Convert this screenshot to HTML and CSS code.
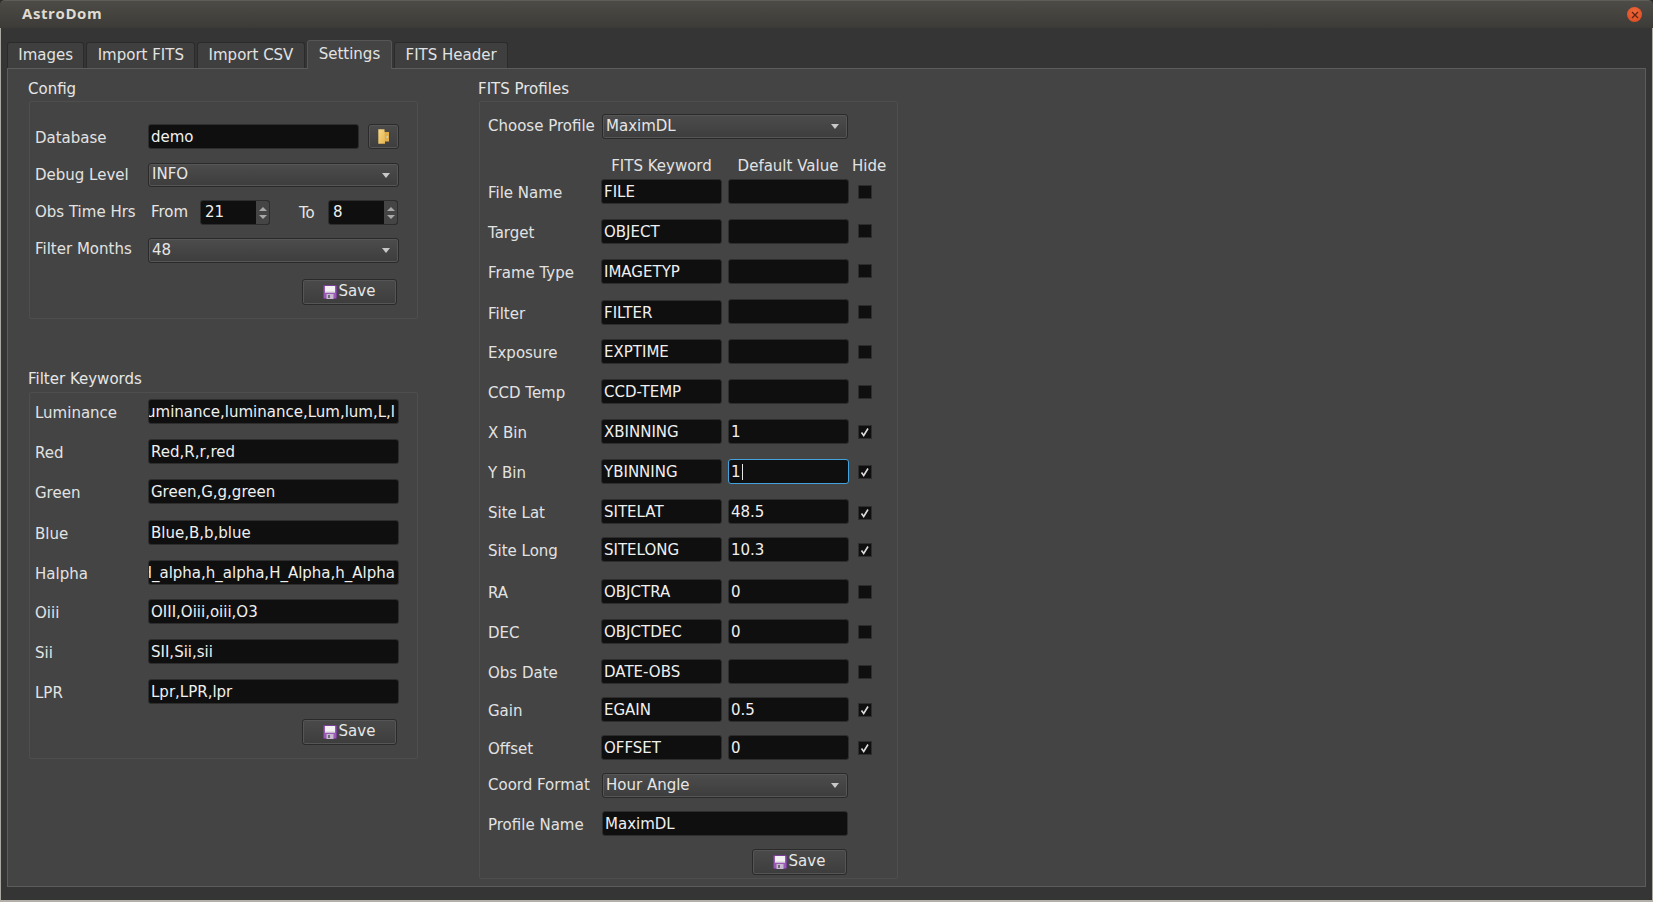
FILE: index.html
```html
<!DOCTYPE html>
<html>
<head>
    <title>AstroDom</title>
    <link rel="stylesheet" href="styles.css">
</head>
<body>
    <svg class="icon-defs" width="0" height="0">
        <symbol id="floppy" viewBox="0 0 14 14">
            <path d="M0.5 1.5a1 1 0 0 1 1-1h11a1 1 0 0 1 1 1v11a1 1 0 0 1-1 1h-11a1 1 0 0 1-1-1z" fill="#9b59b6" stroke="#7a3f96"/>
            <rect x="2" y="1" width="10" height="6.5" fill="#f2f2f2"/>
            <rect x="2" y="6.5" width="10" height="1" fill="#cfcfcf"/>
            <rect x="3.5" y="9" width="7" height="5" fill="#c9b8d2"/>
            <rect x="5" y="10" width="2" height="3" fill="#6d6d6d"/>
        </symbol>
        <symbol id="caret" viewBox="0 0 8 5">
            <path d="M0 0h8l-4 5z" fill="#c8c8c8"/>
        </symbol>
        <symbol id="tick" viewBox="0 0 12 12">
            <path d="M2.5 6.5l2.2 3 4.3-7" fill="none" stroke="#dcdcdc" stroke-width="1.6"/>
        </symbol>
        <linearGradient id="folder-door" x1="0" y1="0" x2="1" y2="1">
            <stop offset="0" stop-color="#f8da86"/>
            <stop offset="1" stop-color="#e5b44f"/>
        </linearGradient>
    </svg>

    <div class="window">
        <div class="titlebar">
            <span class="window-title">AstroDom</span>
            <span class="close-btn">
                <svg width="8" height="8" viewBox="0 0 8 8"><path d="M1 1l6 6M7 1l-6 6" stroke="#5b2415" stroke-width="1.3"/></svg>
            </span>
        </div>

        <div class="content">
            <div class="tabs">
                <div class="tab">Images</div>
                <div class="tab">Import FITS</div>
                <div class="tab">Import CSV</div>
                <div class="tab active">Settings</div>
                <div class="tab">FITS Header</div>
            </div>

            <div class="pane">
                <div class="left-col">
                    <div class="group-title">Config</div>
                    <div class="group config-group">
                        <div class="label">Database</div>
                        <div class="field">demo</div>
                        <div class="tool-btn">
                            <svg width="11" height="15" viewBox="0 0 11 15">
                                <path d="M6 3h5v9.5h-5z" fill="#e0ad4c"/>
                                <path d="M0.3 0.3h6.2l0.5 14.4h-6.7z" fill="url(#folder-door)"/>
                                <rect x="8.5" y="7" width="1.5" height="2" fill="#a8d8e4"/>
                            </svg>
                        </div>

                        <div class="label label-up">Debug Level</div>
                        <div class="combo wide debug-combo">INFO<svg class="caret"><use href="#caret"/></svg></div>

                        <div class="label label-up">Obs Time Hrs</div>
                        <div class="time-row wide">
                            <span class="from-label">From</span>
                            <div class="spin"><span class="spin-value">21</span><span class="spin-arrows"><i class="up"></i><i class="down"></i></span></div>
                            <span class="to-label">To</span>
                            <div class="spin"><span class="spin-value">8</span><span class="spin-arrows"><i class="up"></i><i class="down"></i></span></div>
                        </div>

                        <div class="label label-up-more">Filter Months</div>
                        <div class="combo wide">48<svg class="caret"><use href="#caret"/></svg></div>

                        <div class="button save-wide"><svg class="floppy"><use href="#floppy"/></svg>Save</div>
                    </div>

                    <div class="group-title filter-title">Filter Keywords</div>
                    <div class="group filter-group">
                        <div class="label">Luminance</div>
                        <div class="field clipped">Luminance,luminance,Lum,lum,L,l</div>
                        <div class="label">Red</div>
                        <div class="field">Red,R,r,red</div>
                        <div class="label">Green</div>
                        <div class="field">Green,G,g,green</div>
                        <div class="label">Blue</div>
                        <div class="field">Blue,B,b,blue</div>
                        <div class="label">Halpha</div>
                        <div class="field clipped">H_alpha,h_alpha,H_Alpha,h_Alpha</div>
                        <div class="label">Oiii</div>
                        <div class="field">OIII,Oiii,oiii,O3</div>
                        <div class="label">Sii</div>
                        <div class="field">SII,Sii,sii</div>
                        <div class="label">LPR</div>
                        <div class="field">Lpr,LPR,lpr</div>
                        <div class="button save-filter"><svg class="floppy"><use href="#floppy"/></svg>Save</div>
                    </div>
                </div>

                <div class="right-col">
                    <div class="group-title">FITS Profiles</div>
                    <div class="group profile-group">
                        <div class="label label-up">Choose Profile</div>
                        <div class="combo span-two">MaximDL<svg class="caret"><use href="#caret"/></svg></div>
                        <div></div>

                        <div></div>
                        <div class="col-head">FITS Keyword</div>
                        <div class="col-head default-head">Default Value</div>
                        <div class="col-head hide-head">Hide</div>

                        <div class="label">File Name</div>
                        <div class="field">FILE</div>
                        <div class="field"></div>
                        <div class="check"></div>

                        <div class="label">Target</div>
                        <div class="field">OBJECT</div>
                        <div class="field"></div>
                        <div class="check check-up"></div>

                        <div class="label">Frame Type</div>
                        <div class="field">IMAGETYP</div>
                        <div class="field"></div>
                        <div class="check check-up"></div>

                        <div class="label">Filter</div>
                        <div class="field">FILTER</div>
                        <div class="field field-up"></div>
                        <div class="check check-up"></div>

                        <div class="label">Exposure</div>
                        <div class="field">EXPTIME</div>
                        <div class="field"></div>
                        <div class="check"></div>

                        <div class="label">CCD Temp</div>
                        <div class="field">CCD-TEMP</div>
                        <div class="field"></div>
                        <div class="check"></div>

                        <div class="label">X Bin</div>
                        <div class="field">XBINNING</div>
                        <div class="field">1</div>
                        <div class="check"><svg class="tick"><use href="#tick"/></svg></div>

                        <div class="label">Y Bin</div>
                        <div class="field">YBINNING</div>
                        <div class="field focused">1<span class="cursor"></span></div>
                        <div class="check"><svg class="tick"><use href="#tick"/></svg></div>

                        <div class="label">Site Lat</div>
                        <div class="field">SITELAT</div>
                        <div class="field">48.5</div>
                        <div class="check check-down"><svg class="tick"><use href="#tick"/></svg></div>

                        <div class="label">Site Long</div>
                        <div class="field">SITELONG</div>
                        <div class="field">10.3</div>
                        <div class="check"><svg class="tick"><use href="#tick"/></svg></div>

                        <div class="label">RA</div>
                        <div class="field">OBJCTRA</div>
                        <div class="field">0</div>
                        <div class="check"></div>

                        <div class="label">DEC</div>
                        <div class="field">OBJCTDEC</div>
                        <div class="field">0</div>
                        <div class="check"></div>

                        <div class="label">Obs Date</div>
                        <div class="field">DATE-OBS</div>
                        <div class="field"></div>
                        <div class="check"></div>

                        <div class="label">Gain</div>
                        <div class="field">EGAIN</div>
                        <div class="field">0.5</div>
                        <div class="check"><svg class="tick"><use href="#tick"/></svg></div>

                        <div class="label">Offset</div>
                        <div class="field">OFFSET</div>
                        <div class="field">0</div>
                        <div class="check"><svg class="tick"><use href="#tick"/></svg></div>

                        <div class="label label-up">Coord Format</div>
                        <div class="combo span-two">Hour Angle<svg class="caret"><use href="#caret"/></svg></div>
                        <div></div>

                        <div class="label">Profile Name</div>
                        <div class="field span-two">MaximDL</div>
                        <div></div>

                        <div class="button save-profile"><svg class="floppy"><use href="#floppy"/></svg>Save</div>
                    </div>
                </div>
            </div>
        </div>
    </div>
</body>
</html>
```

FILE: styles.css
```css
html, body {
    margin: 0;
    padding: 0;
    height: 100%;
}

body {
    font-family: "DejaVu Sans", sans-serif;
    font-size: 15px;
    color: #e6e6e6;
    background-color: #2d2c2a;
    overflow: hidden;
}

.icon-defs {
    position: absolute;
}

.window {
    box-sizing: border-box;
    height: 100%;
    display: flex;
    flex-direction: column;
    border-bottom: 2px solid #b3b0a9;
}

.titlebar {
    height: 28px;
    flex: none;
    box-sizing: border-box;
    display: flex;
    align-items: center;
    justify-content: space-between;
    padding: 0 11px 0 22px;
    background: linear-gradient(#4d4b46, #3c3b37);
    border-top: 1px solid #5f5d58;
    border-radius: 5px 5px 0 0;
}

.window-title {
    margin-top: -4px;
    font-family: "Open Sans", sans-serif;
    font-weight: 700;
    font-size: 15px;
    letter-spacing: 0.6px;
    color: #dfdbd2;
}

.close-btn {
    width: 15px;
    height: 15px;
    display: flex;
    align-items: center;
    justify-content: center;
    border-radius: 50%;
    background: radial-gradient(circle at 50% 35%, #f0693a, #d9481f);
}

.content {
    flex: 1;
    min-height: 0;
    display: flex;
    flex-direction: column;
    padding: 12px 6px 13px 6px;
    background-color: #353535;
    border-left: 1px solid #a9a7a1;
    border-right: 1px solid #a9a7a1;
}

.tabs {
    display: flex;
    align-items: flex-end;
    gap: 2px;
    height: 28px;
    flex: none;
    position: relative;
    z-index: 1;
}

.tab {
    box-sizing: border-box;
    height: 26px;
    padding: 0 10.3px;
    line-height: 25px;
    color: #e2e2e2;
    background-color: #3f3f3f;
    border: 1px solid #2b2b2b;
    border-bottom: none;
    border-radius: 3px 3px 0 0;
}

.tab.active {
    height: 29px;
    margin-bottom: -1px;
    padding: 0 11px;
    background-color: #444444;
    border-color: #565656;
    line-height: 27px;
}

.pane {
    flex: 1;
    min-height: 0;
    display: flex;
    gap: 60px;
    padding: 9px 0 0 20px;
    background-color: #444444;
    border: 1px solid #5c5c5c;
}

.left-col {
    width: 390px;
    flex: none;
}

.right-col {
    width: 420px;
    flex: none;
}

.group-title {
    height: 23px;
    line-height: 22px;
    color: #e6e6e6;
}

.filter-title {
    height: 24px;
    margin-top: 49px;
}

.group {
    box-sizing: border-box;
    margin-left: 1px;
    display: grid;
    border: 1px solid #4e4e4e;
    border-radius: 2px;
    align-items: start;
}

.config-group {
    height: 218px;
    padding: 22px 0 0 5px;
    grid-template-columns: 113px 211px 9px 31px;
    grid-template-rows: 39px 37px 38px 41px 26px;
}

.filter-group {
    height: 367px;
    padding: 6px 0 0 5px;
    grid-template-columns: 113px 251px;
    grid-template-rows: 40px 40px 41px 40px 39px 40px 40px 40px 26px;
}

.profile-group {
    height: 778px;
    padding: 12px 0 0 8px;
    grid-template-columns: 113px 121px 127px 26px;
    grid-template-rows: 41px 24px 40px 40px 41px 39px 40px 40px 40px 40px 38px 42px 40px 40px 38px 38px 38px 38px 38px 26px;
}

.label {
    height: 25px;
    line-height: 29px;
    white-space: nowrap;
    color: #e2e2e2;
}

.label-up {
    margin-top: -2px;
}

.label-up-more {
    margin-top: -3px;
}

.field {
    box-sizing: border-box;
    height: 25px;
    min-width: 0;
    padding: 0 3px 0 2px;
    line-height: 24px;
    white-space: nowrap;
    overflow: hidden;
    color: #f0f0f0;
    background-color: #0f0f0f;
    border: 1px solid #2d2d2d;
    border-radius: 3px;
}

.profile-group .field + .field {
    margin-left: 6px;
}

.field-up {
    margin-top: -1px;
}

.clipped {
    display: flex;
    justify-content: flex-end;
}

.focused {
    border-color: #44a3de;
}

.cursor {
    display: inline-block;
    width: 1px;
    height: 16px;
    margin-left: 1px;
    vertical-align: -3px;
    background-color: #e6e6e6;
}

.tool-btn {
    grid-column: 4;
    box-sizing: border-box;
    height: 25px;
    display: flex;
    align-items: center;
    justify-content: center;
    background: linear-gradient(#4b4b4b, #3e3e3e);
    border: 1px solid #2b2b2b;
    border-radius: 3px;
    box-shadow: inset 0 0 0 1px #555555;
}

.combo {
    box-sizing: border-box;
    height: 25px;
    padding: 0 8px 2px 3px;
    display: flex;
    align-items: center;
    justify-content: space-between;
    color: #e6e6e6;
    background: linear-gradient(#4c4c4c, #3d3d3d);
    border: 1px solid #2a2a2a;
    border-radius: 3px;
    box-shadow: inset 0 0 0 1px #565656;
}

.debug-combo {
    height: 24px;
}

.caret {
    width: 8px;
    height: 5px;
    flex: none;
    margin-top: 2px;
}

.wide {
    grid-column: 2 / span 3;
}

.span-two {
    grid-column: 2 / span 2;
    margin: 0 1px;
}

.time-row {
    display: flex;
    align-items: center;
}

.from-label {
    width: 49px;
    margin-left: 3px;
    margin-top: -2px;
}

.to-label {
    width: 29px;
    margin-left: 29px;
}

.spin {
    box-sizing: border-box;
    width: 70px;
    height: 25px;
    display: flex;
    background-color: #0f0f0f;
    border: 1px solid #2d2d2d;
    border-radius: 3px;
    overflow: hidden;
}

.spin-value {
    flex: 1;
    padding-left: 4px;
    line-height: 23px;
    color: #f0f0f0;
}

.spin-arrows {
    width: 13px;
    display: flex;
    flex-direction: column;
    align-items: center;
    justify-content: center;
    gap: 4px;
    background-color: #454545;
}

.spin-arrows i {
    width: 0;
    height: 0;
    border-left: 4px solid transparent;
    border-right: 4px solid transparent;
}

.spin-arrows .up {
    border-bottom: 4px solid #a8a8a8;
}

.spin-arrows .down {
    border-top: 4px solid #a8a8a8;
}

.button {
    box-sizing: border-box;
    width: 95px;
    height: 26px;
    display: flex;
    align-items: center;
    justify-content: center;
    gap: 2px;
    padding: 0 1px 2px 0;
    color: #e6e6e6;
    background: linear-gradient(#4a4a4a, #3d3d3d);
    border: 1px solid #2a2a2a;
    border-radius: 3px;
    box-shadow: inset 0 0 0 1px #555555;
}

.floppy {
    width: 14px;
    height: 14px;
    flex: none;
    margin-top: 2px;
}

.save-wide {
    grid-column: 2 / span 3;
    justify-self: end;
    margin-right: 2px;
}

.save-filter {
    grid-column: 2;
    justify-self: end;
    margin-right: 2px;
}

.save-profile {
    grid-column: 2 / span 2;
    justify-self: end;
    margin-right: 2px;
}

.col-head {
    height: 20px;
    margin-top: 1px;
    line-height: 20px;
    text-align: center;
    white-space: nowrap;
    color: #e2e2e2;
}

.default-head {
    margin-left: 5px;
}

.hide-head {
    margin-left: 3px;
    text-align: left;
}

.check {
    box-sizing: border-box;
    width: 14px;
    height: 14px;
    margin: 6px 0 0 9px;
    background-color: #0f0f0f;
    border: 1px solid #2d2d2d;
}

.check-up {
    margin-top: 5px;
}

.check-down {
    margin-top: 7px;
}

.tick {
    display: block;
    width: 12px;
    height: 12px;
}
```
